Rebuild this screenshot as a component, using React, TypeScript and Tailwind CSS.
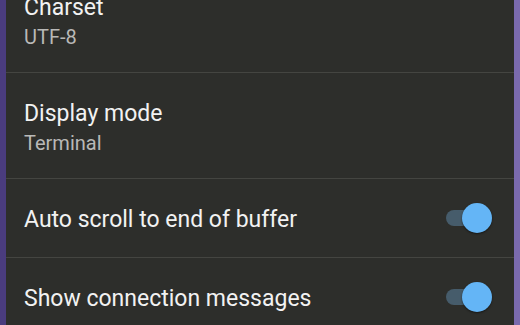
import { useState } from 'react';

interface Pref {
  title: string;
  summary?: string;
  toggle?: boolean;
}

const prefs: Pref[] = [
  { title: 'Charset', summary: 'UTF-8' },
  { title: 'Display mode', summary: 'Terminal' },
  { title: 'Auto scroll to end of buffer', toggle: true },
  { title: 'Show connection messages', toggle: true },
];

function Switch({ on, onClick }: { on: boolean; onClick: () => void }) {
  return (
    <button onClick={onClick} className="relative w-[46px] h-[30px] shrink-0">
      <span
        className={
          'absolute left-[0px] top-[7px] h-[16px] w-[38px] rounded-full ' +
          (on ? 'bg-[#465c6b]' : 'bg-[#5a5a5a]')
        }
      />
      <span
        className={
          'absolute top-0 h-[30px] w-[30px] rounded-full shadow-[0_1px_2px_rgba(0,0,0,0.5)] ' +
          (on ? 'left-[16px] bg-[#64b5f6]' : 'left-[-4px] bg-[#bdbdbd]')
        }
      />
    </button>
  );
}

export default function App() {
  const [toggles, setToggles] = useState<Record<string, boolean>>({
    'Auto scroll to end of buffer': true,
    'Show connection messages': true,
  });

  return (
    <div
      className="flex w-[520px] h-[325px] overflow-hidden bg-[#2d2e2b]"
      style={{ fontFamily: 'Roboto, "Noto Sans", sans-serif' }}
    >
      <div className="w-[6px] shrink-0 bg-[#4a3c7e]" />
      <div className="flex-1 flex flex-col">
        {prefs.map((p, i) => (
          <div
            key={p.title}
            className={
              'flex shrink-0 items-center border-b border-[#444541] pl-[18px] pr-[22px] ' +
              (p.toggle ? 'h-[79px]' : 'h-[106px]') +
              (i === 0 ? ' -mt-[33px]' : '')
            }
          >
            <div className={'flex-1 flex flex-col ' + (p.toggle ? 'pt-[3px]' : 'pt-[4px]')}>
              <span className="text-[23px] leading-[28px] text-[#f2f2f2]">{p.title}</span>
              {p.summary && (
                <span className="text-[20px] leading-[24px] mt-[3px] text-[#b9b9b7]">{p.summary}</span>
              )}
            </div>
            {p.toggle && (
              <Switch
                on={toggles[p.title]}
                onClick={() => setToggles(prev => ({ ...prev, [p.title]: !prev[p.title] }))}
              />
            )}
          </div>
        ))}
      </div>
      <div className="w-[6px] shrink-0 bg-[#7a6aae]" />
    </div>
  );
}
